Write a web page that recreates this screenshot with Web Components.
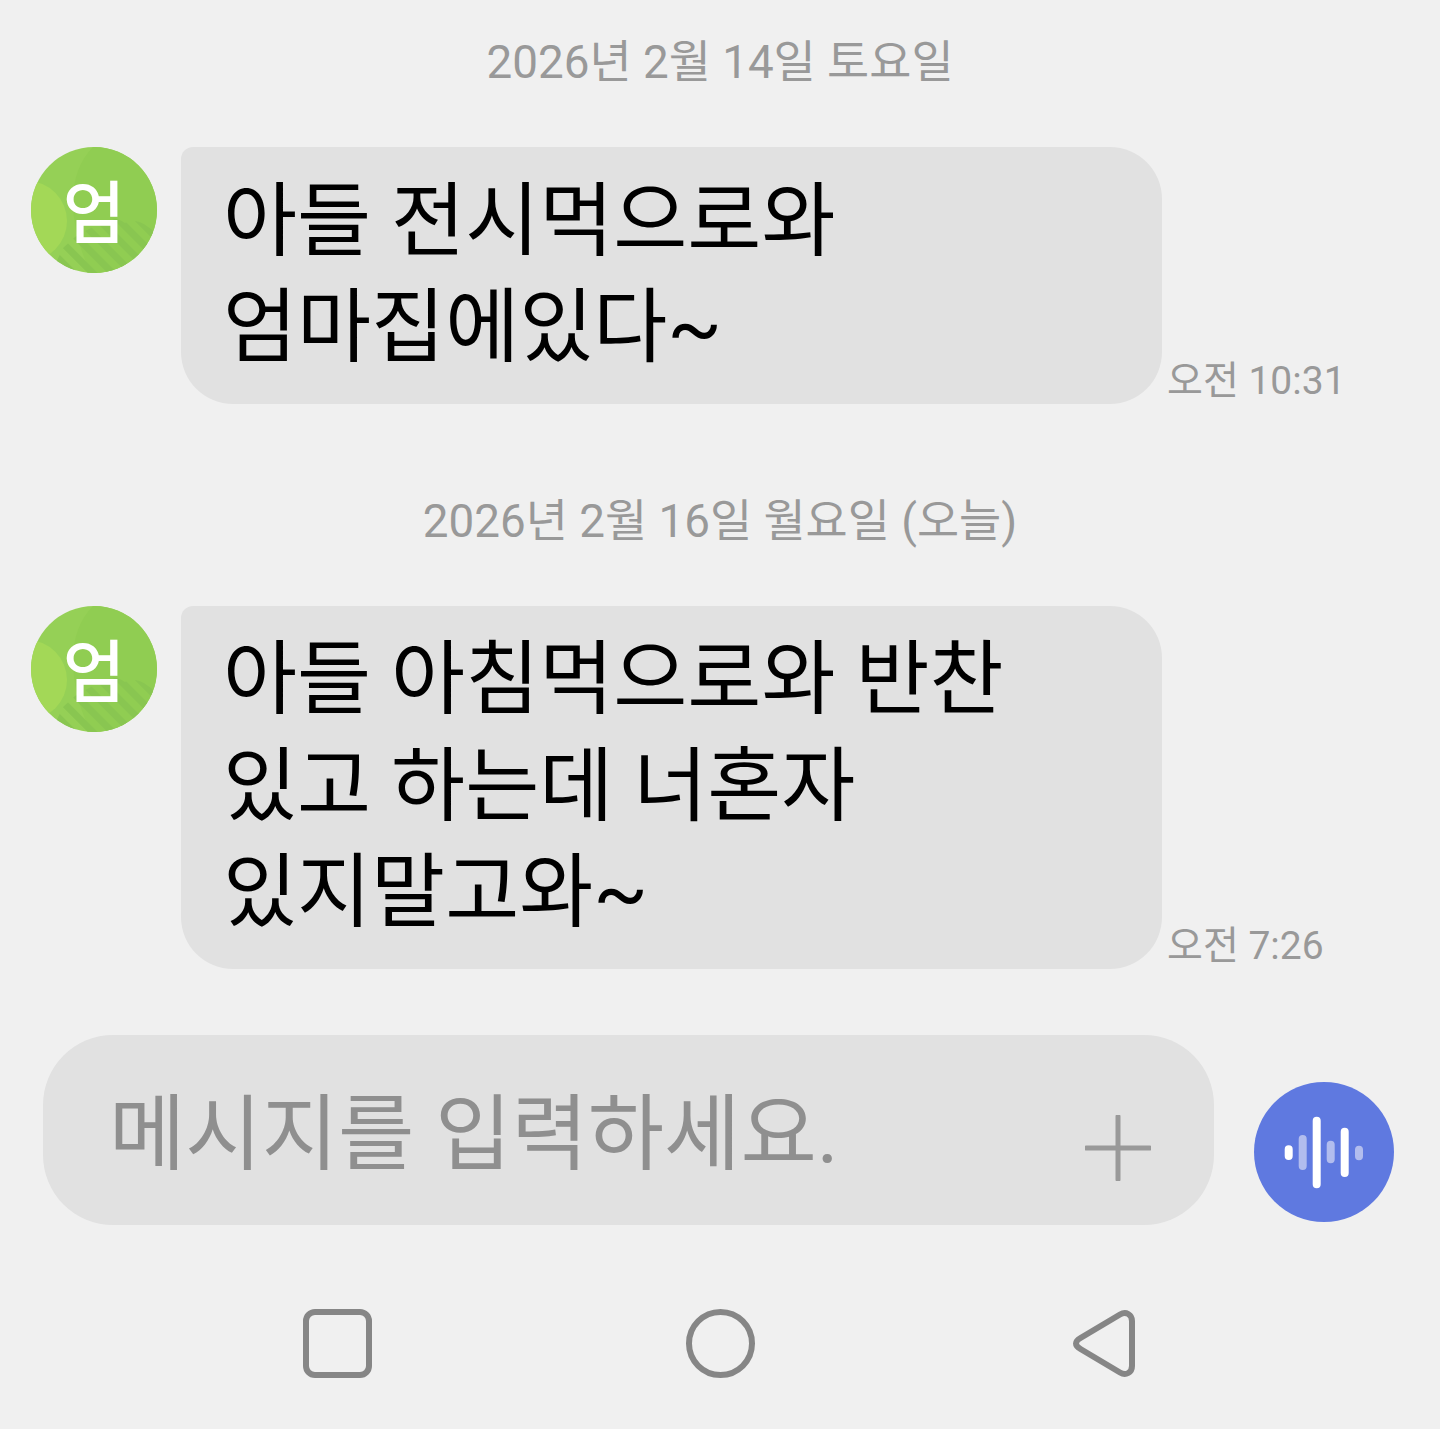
<!DOCTYPE html>
<html lang="ko">
<head>
<meta charset="utf-8">
<title>메시지</title>
<style>
    html, body {
        margin: 0;
        padding: 0;
        background: #f0f0f0;
    }

    body {
        font-family: Roboto, "Noto Sans CJK KR", sans-serif;
    }
</style>
</head>
<body>
<chat-screen>
    <date-line style="--top: 35px; --bottom: 53px">2026년 2월 14일 토요일</date-line>
    <chat-message name="엄" time="오전 10:31">아들 전시먹으로와<br>엄마집에있다~</chat-message>
    <date-line style="--top: 90px; --bottom: 53px">2026년 2월 16일 월요일 (오늘)</date-line>
    <chat-message name="엄" time="오전 7:26">아들 아침먹으로와 반찬<br>있고 하는데 너혼자<br>있지말고와~</chat-message>
    <message-input placeholder="메시지를 입력하세요."></message-input>
    <nav-bar></nav-bar>
</chat-screen>

<script>
class ChatScreen extends HTMLElement {
    constructor() {
        super();
        this.attachShadow({ mode: "open" });
    }

    connectedCallback() {
        this.shadowRoot.innerHTML = `
            <style>
                :host {
                    display: flex;
                    flex-direction: column;
                    width: 1440px;
                    height: 1429px;
                    overflow: hidden;
                    background: #f0f0f0;
                }
            </style>
            <slot></slot>
        `;
    }
}

class DateLine extends HTMLElement {
    constructor() {
        super();
        this.attachShadow({ mode: "open" });
    }

    connectedCallback() {
        this.shadowRoot.innerHTML = `
            <style>
                :host {
                    display: block;
                    margin: var(--top) 0 var(--bottom);
                    height: 59px;
                    line-height: 55px;
                    text-align: center;
                    font-size: 45.8px;
                    color: #999999;
                    white-space: nowrap;
                }
            </style>
            <slot></slot>
        `;
    }
}

class ChatMessage extends HTMLElement {
    constructor() {
        super();
        this.attachShadow({ mode: "open" });
    }

    connectedCallback() {
        const uid = "c" + Math.random().toString(36).slice(2, 8);
        this.shadowRoot.innerHTML = `
            <style>
                :host {
                    display: flex;
                    align-items: flex-start;
                    padding-left: 31px;
                }

                .avatar {
                    position: relative;
                    flex: none;
                    width: 126px;
                    height: 126px;
                    margin-right: 24px;
                }

                .avatar svg {
                    display: block;
                }

                .avatar span {
                    position: absolute;
                    inset: 0;
                    text-align: center;
                    line-height: 136px;
                    font-size: 68px;
                    font-weight: 500;
                    color: #ffffff;
                }

                .bubble {
                    box-sizing: border-box;
                    width: 981px;
                    padding: 21.5px 42px 22px;
                    border-radius: 12px 52px 52px 52px;
                    background: #e1e1e1;
                    font-size: 80.5px;
                    line-height: 106.5px;
                    color: #000000;
                    white-space: nowrap;
                }

                .time {
                    align-self: flex-end;
                    margin: 0 0 -1px 5px;
                    font-size: 39px;
                    line-height: 48px;
                    color: #999999;
                    white-space: nowrap;
                }
            </style>
            <div class="avatar">
                <svg width="126" height="126" viewBox="0 0 126 126">
                    <defs>
                        <clipPath id="${uid}"><circle cx="63" cy="63" r="63"/></clipPath>
                        <pattern id="${uid}s" width="14" height="14" patternUnits="userSpaceOnUse" patternTransform="rotate(45)">
                            <rect width="14" height="7" fill="#89c651"/>
                        </pattern>
                    </defs>
                    <g clip-path="url(#${uid})">
                        <rect width="126" height="126" fill="#95d056"/>
                        <path d="M62 0 Q42 20 42 55 Q42 90 60 126 L126 126 L126 0 Z" fill="#90cd52"/>
                        <circle cx="-4" cy="74" r="40" fill="#a3d857"/>
                        <path d="M20 126 L32 101 L44 90 Q60 80 68 78 Q80 66 94 76 Q108 68 126 88 L126 126 Z" fill="url(#${uid}s)"/>
                    </g>
                </svg>
                <span>${this.getAttribute("name")}</span>
            </div>
            <div class="bubble"><slot></slot></div>
            <div class="time">${this.getAttribute("time")}</div>
        `;
    }
}

class MessageInput extends HTMLElement {
    constructor() {
        super();
        this.attachShadow({ mode: "open" });
    }

    connectedCallback() {
        this.shadowRoot.innerHTML = `
            <style>
                :host {
                    display: flex;
                    align-items: flex-start;
                    margin-top: 66px;
                    padding-left: 43px;
                }

                .field {
                    box-sizing: border-box;
                    display: flex;
                    align-items: center;
                    justify-content: space-between;
                    width: 1171px;
                    height: 190px;
                    padding: 0 63px 6px 66px;
                    border-radius: 70px;
                    background: #e1e1e1;
                }

                .placeholder {
                    font-size: 83px;
                    color: #8f8f8f;
                    white-space: nowrap;
                }

                .plus {
                    display: block;
                    align-self: flex-start;
                    margin-top: 80px;
                }

                .voice {
                    flex: none;
                    margin: 47px 0 0 40px;
                    width: 140px;
                    height: 140px;
                }

                svg {
                    display: block;
                }
            </style>
            <div class="field">
                <span class="placeholder">${this.getAttribute("placeholder")}</span>
                <svg class="plus" width="66" height="66" viewBox="0 0 66 66" fill="none" stroke="#999999" stroke-width="5" stroke-linecap="round">
                    <path d="M33 1.500V64.500M1.500 33H64.500"/>
                </svg>
            </div>
            <div class="voice">
                <svg width="140" height="140" viewBox="0 0 140 140" stroke-width="8" stroke-linecap="round">
                    <circle cx="70" cy="70" r="70" fill="#5f79e0"/>
                    <path stroke="#ffffff" d="M34.700 67.300V74M62.700 38.700V102.300M90.700 49.700V91"/>
                    <path stroke="#b2bdee" d="M48.700 57V84M76.700 62.700V77.300M105 67.700V74.300"/>
                </svg>
            </div>
        `;
    }
}

class NavBar extends HTMLElement {
    constructor() {
        super();
        this.attachShadow({ mode: "open" });
    }

    connectedCallback() {
        this.shadowRoot.innerHTML = `
            <style>
                :host {
                    display: flex;
                    align-items: center;
                    margin-top: 84px;
                    padding-left: 303px;
                    height: 69px;
                }

                svg {
                    display: block;
                    flex: none;
                }

                .home {
                    margin-left: 314px;
                }

                .back {
                    margin-left: 318px;
                }
            </style>
            <svg width="69" height="69" viewBox="0 0 69 69" fill="none" stroke="#868686" stroke-width="6">
                <rect x="3" y="3" width="63" height="63" rx="9"/>
            </svg>
            <svg class="home" width="69" height="69" viewBox="0 0 69 69" fill="none" stroke="#868686" stroke-width="6">
                <circle cx="34.500" cy="34.500" r="31.500"/>
            </svg>
            <svg class="back" width="62" height="69" viewBox="0 0 62 69" fill="none" stroke="#868686" stroke-width="6" stroke-linejoin="round">
                <path d="M7.500 29 L47 5.500 C53 2 59 5.500 59 12 V57 C59 63.500 53 67 47 63.500 L7.500 40 C1.500 36.500 1.500 32.500 7.500 29 Z"/>
            </svg>
        `;
    }
}

customElements.define("chat-screen", ChatScreen);
customElements.define("date-line", DateLine);
customElements.define("chat-message", ChatMessage);
customElements.define("message-input", MessageInput);
customElements.define("nav-bar", NavBar);
</script>
</body>
</html>
